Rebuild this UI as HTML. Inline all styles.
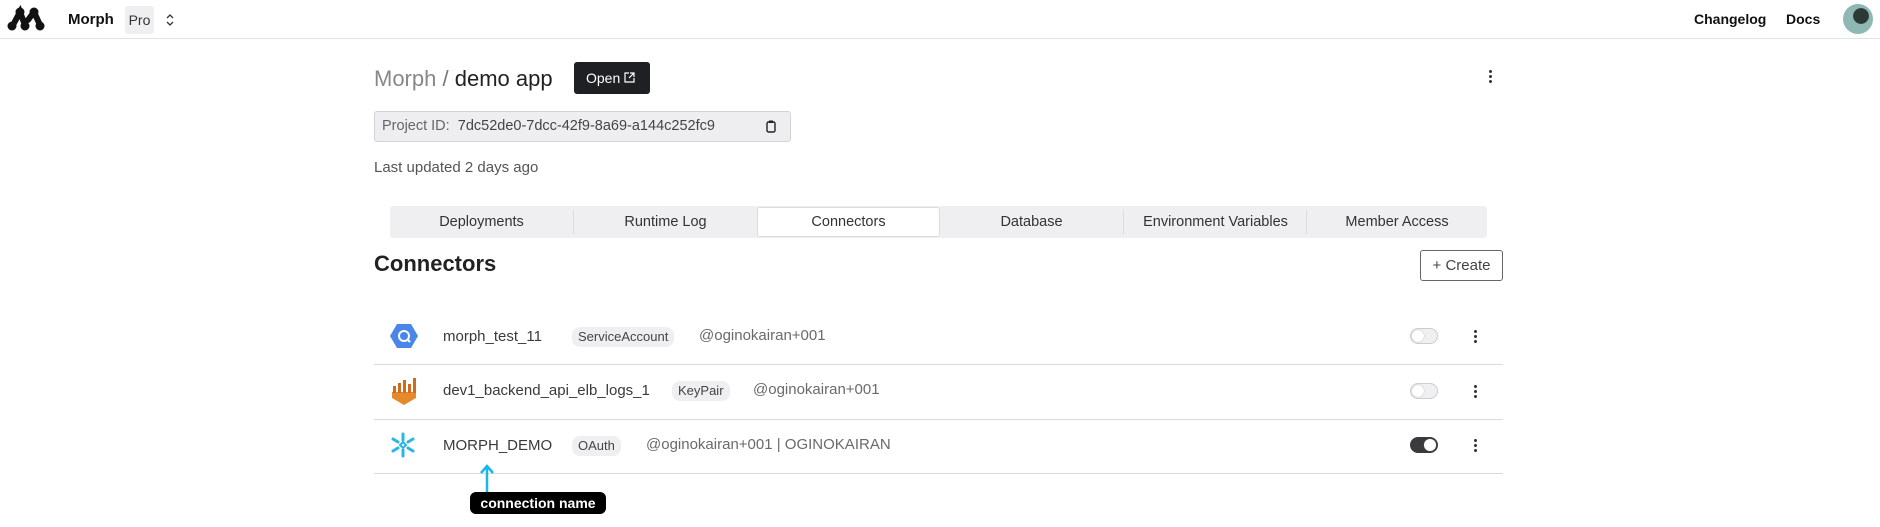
<!DOCTYPE html>
<html><head><meta charset="utf-8"><style>
*{box-sizing:border-box;margin:0;padding:0}
body{width:1880px;height:527px;background:#fff;font-family:"Liberation Sans",sans-serif;color:#2a2a2e;position:relative;overflow:hidden}
.a{position:absolute}
.hdr{left:0;top:0;width:1880px;height:39px;border-bottom:1px solid #e2e2e6}
.tab{position:absolute;top:0;height:31px;width:183px;text-align:center;line-height:32px;font-size:14.5px;color:#333}
.badge{position:absolute;background:#efeff1;border-radius:8px;height:20px;line-height:20px;font-size:13px;padding:0 6px;color:#444}
.name{position:absolute;font-size:15px;color:#3a3a3a}
.acc{position:absolute;font-size:15px;color:#6a6a6a}
.tog{position:absolute;width:28px;height:16px;border-radius:8px;border:1px solid #ccc;background:#f0f0f2}
.tog::after{content:"";position:absolute;left:1px;top:1px;width:12px;height:12px;border-radius:50%;background:#fff;box-shadow:0 0 1px #888}
.tog.on{background:#3a3a3c;border-color:#3a3a3c}
.tog.on::after{left:13px}
.keb{position:absolute;width:3px}
.keb i{display:block;width:3px;height:3px;border-radius:50%;background:#333;margin-bottom:2px}
.div{position:absolute;left:374px;width:1129px;height:1px;background:#dcdce0}
</style></head><body>
<div class="a hdr"></div>
<svg class="a" style="left:0;top:0" width="60" height="40" viewBox="0 0 60 40"><g stroke="#111" stroke-width="6" stroke-linecap="round" fill="none"><path d="M13 25L20 12L25 25M34 12L40 25"/><path d="M34 12L28 20"/></g><g fill="#111"><circle cx="20" cy="12" r="4.5"/><circle cx="34" cy="12" r="4.5"/><circle cx="12" cy="26" r="4.5"/><circle cx="25" cy="26" r="4.5"/><circle cx="40" cy="26" r="4.5"/></g></svg>
<div class="a" style="left:68px;top:11px;font-size:15px;font-weight:bold;color:#111">Morph</div>
<div class="a" style="left:125px;top:6px;width:29px;height:28px;background:#efeff1;border-radius:3px;font-size:14px;line-height:28px;text-align:center;color:#333">Pro</div>
<svg class="a" style="left:165px;top:12px" width="10" height="16" viewBox="0 0 10 16"><path d="M2 6 L5 3 L8 6 M2 10 L5 13 L8 10" fill="none" stroke="#333" stroke-width="1.3"/></svg>
<div class="a" style="left:1694px;top:11px;font-size:14px;font-weight:bold;color:#111">Changelog</div>
<div class="a" style="left:1786px;top:11px;font-size:14px;font-weight:bold;color:#111">Docs</div>
<div class="a" style="left:1843px;top:4px;width:30px;height:30px;border-radius:50%;background:radial-gradient(circle at 60% 40%,#2b3a36 0 30%,#8fb8b5 32%)"></div>

<div class="a" style="left:374px;top:66px;font-size:22px;color:#888">Morph <span style="color:#777">/</span> <span style="color:#222">demo app</span></div>
<div class="a" style="left:574px;top:62px;width:76px;height:32px;background:#1f2023;border-radius:3px;color:#fff;font-size:14px;line-height:32px;padding-left:12px">Open<svg style="position:absolute;left:50px;top:10px" width="11" height="11" viewBox="0 0 11 11"><path d="M5 1H1V10H10V6 M6 1H10V5 M10 1L5 6" fill="none" stroke="#fff" stroke-width="1.2"/></svg></div>
<div class="keb" style="left:1489px;top:70px"><i></i><i></i><i></i></div>
<div class="a" style="left:374px;top:111px;width:417px;height:31px;background:#eeeef0;border:1px solid #d4d4d8;border-radius:3px;font-size:14.5px;line-height:29px;padding-left:7px;color:#666">Project ID:&nbsp; <span style="color:#444">7dc52de0-7dcc-42f9-8a69-a144c252fc9</span>
<svg style="position:absolute;left:391px;top:8px" width="10" height="13" viewBox="0 0 10 13"><rect x="1" y="2" width="8" height="10" rx="1.5" fill="none" stroke="#222" stroke-width="1.4"/><rect x="3" y="0.5" width="4" height="2.5" fill="#222"/></svg></div>
<div class="a" style="left:374px;top:159px;font-size:15px;color:#555">Last updated 2 days ago</div>

<div class="a" style="left:390px;top:206px;width:1097px;height:32px;background:#efeff1;border-radius:3px">
<div class="tab" style="left:0">Deployments</div>
<div class="a" style="left:183px;top:4px;width:1px;height:24px;background:#ddd"></div>
<div class="tab" style="left:184px">Runtime Log</div>
<div class="tab" style="left:367px;top:1px;height:30px;width:183px;background:#fff;border:1px solid #dcdce0;border-radius:3px;line-height:29px">Connectors</div>
<div class="tab" style="left:550px">Database</div>
<div class="a" style="left:733px;top:4px;width:1px;height:24px;background:#ddd"></div>
<div class="tab" style="left:734px">Environment Variables</div>
<div class="a" style="left:916px;top:4px;width:1px;height:24px;background:#ddd"></div>
<div class="tab" style="left:917px;width:180px">Member Access</div>
</div>

<div class="a" style="left:374px;top:251px;font-size:22px;font-weight:bold;color:#222">Connectors</div>
<div class="a" style="left:1420px;top:250px;width:83px;height:31px;border:1px solid #666;border-radius:3px;font-size:15px;line-height:29px;text-align:center;color:#444">+ Create</div>

<svg class="a" style="left:390px;top:322px" width="28" height="28" viewBox="0 0 28 28"><path d="M7 2H21L28 14L21 26H7L0 14Z" fill="#4a86e8"/><circle cx="14" cy="14" r="5" fill="none" stroke="#fff" stroke-width="2"/><path d="M17 17L20 20" stroke="#fff" stroke-width="2"/></svg>
<div class="name" style="left:443px;top:328px">morph_test_11</div>
<div class="badge" style="left:572px;top:327px">ServiceAccount</div>
<div class="acc" style="left:699px;top:327px">@oginokairan+001</div>
<div class="tog" style="left:1410px;top:328px"></div>
<div class="keb" style="left:1474px;top:330px"><i></i><i></i><i></i></div>
<div class="div" style="top:364px"></div>

<svg class="a" style="left:390px;top:376px" width="28" height="30" viewBox="0 0 28 30"><path d="M2 16H26V22L14 29L2 22Z" fill="#e58a2c"/><g fill="#d16a1c"><rect x="3" y="10" width="3" height="7"/><rect x="8" y="7" width="3" height="10"/><rect x="13" y="4" width="3" height="13"/><rect x="18" y="8" width="3" height="9"/><rect x="23" y="2" width="3" height="15"/></g></svg>
<div class="name" style="left:443px;top:382px">dev1_backend_api_elb_logs_1</div>
<div class="badge" style="left:672px;top:381px">KeyPair</div>
<div class="acc" style="left:753px;top:381px">@oginokairan+001</div>
<div class="tog" style="left:1410px;top:383px"></div>
<div class="keb" style="left:1474px;top:385px"><i></i><i></i><i></i></div>
<div class="div" style="top:419px"></div>

<svg class="a" style="left:390px;top:432px" width="26" height="26" viewBox="0 0 26 26"><g stroke="#29b5e8" stroke-width="3" stroke-linecap="round" fill="none"><path d="M13 2V8M13 18V24M3 7L8 10M18 16L23 19M3 19L8 16M18 10L23 7"/><path d="M13 10L16 13L13 16L10 13Z" stroke-width="2"/></g></svg>
<div class="name" style="left:443px;top:437px">MORPH_DEMO</div>
<div class="badge" style="left:572px;top:436px">OAuth</div>
<div class="acc" style="left:646px;top:436px">@oginokairan+001 | OGINOKAIRAN</div>
<div class="tog on" style="left:1410px;top:437px"></div>
<div class="keb" style="left:1474px;top:439px"><i></i><i></i><i></i></div>
<div class="div" style="top:473px"></div>

<svg class="a" style="left:479px;top:464px" width="16" height="30" viewBox="0 0 16 30"><path d="M8 29V3M2 9L8 2L14 9" fill="none" stroke="#1ab8e8" stroke-width="2.5"/></svg>
<div class="a" style="left:470px;top:492px;width:136px;height:22px;background:#000;border-radius:6px;color:#fff;font-size:14px;font-weight:bold;line-height:22px;text-align:center">connection name</div>
</body></html>
